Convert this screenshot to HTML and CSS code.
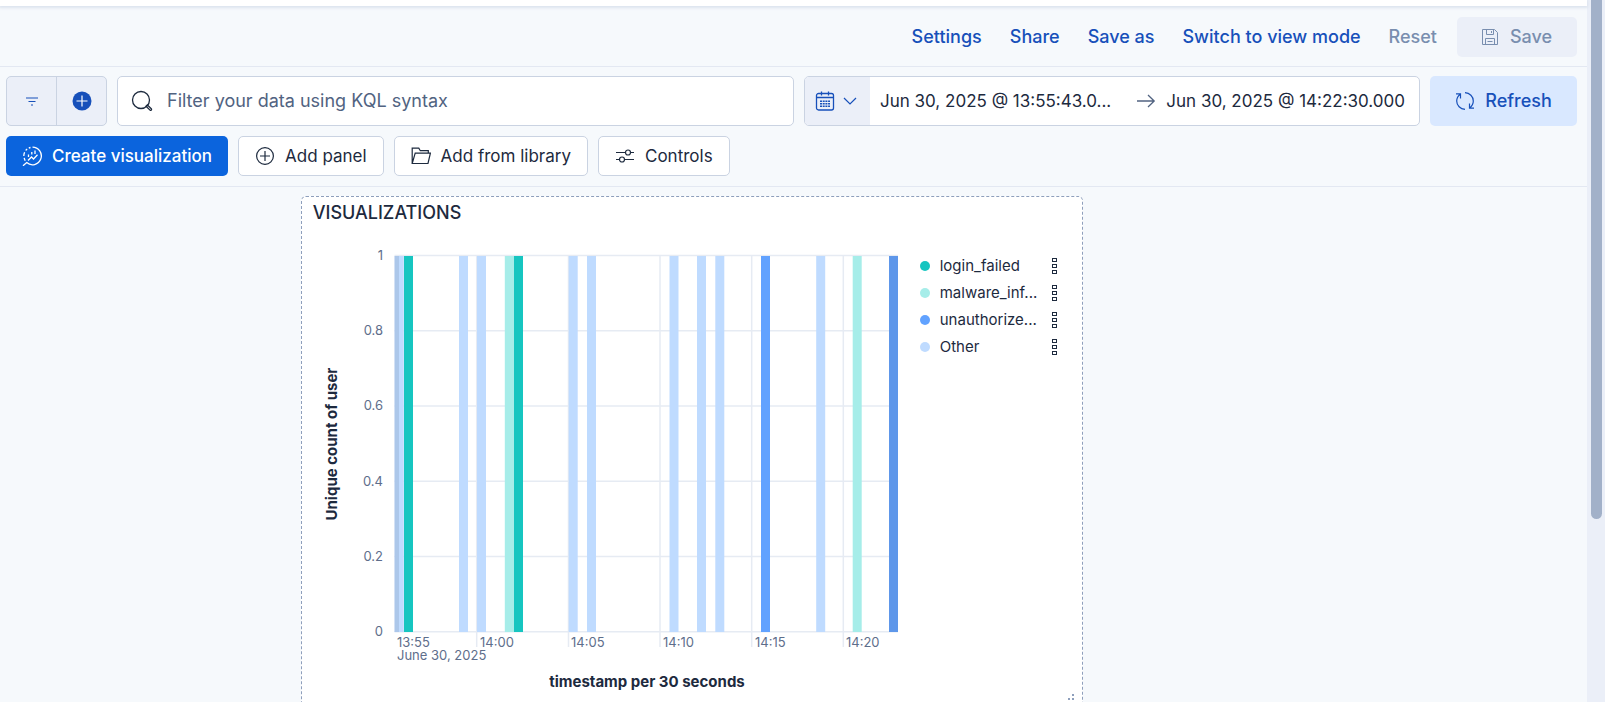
FILE: index.html
```html
<!DOCTYPE html>
<html lang="en">
<head>
<meta charset="utf-8">
<title>Dashboard</title>
<link rel="stylesheet" href="styles.css">
</head>
<body>
<div class="app">
  <div class="top-strip"></div>
  <header class="header">
    <nav class="links">
      <a href="#">Settings</a>
      <a href="#">Share</a>
      <a href="#">Save as</a>
      <a href="#">Switch to view mode</a>
      <button class="reset" type="button" disabled>Reset</button>
    </nav>
    <button class="btn btn-disabled" type="button" disabled>
      <svg class="icon" viewBox="0 0 16 16" fill="none" stroke="currentColor"><path d="M.5.500h12L15.500 3.500v12H.5zM4.500.5v5h7v-5M3.500 15.500v-6h9v6M9.500 2v2M5.500 12.500h5"/></svg>
      Save
    </button>
  </header>
  <section class="query">
    <div class="filters">
      <button type="button" aria-label="Saved queries"><svg class="icon" viewBox="0 0 16 16" fill="none" stroke="currentColor" stroke-width="1.200"><path d="M2 5h12M4.500 8.500h7M7 12h2"/></svg></button>
      <button type="button" aria-label="Add filter"><svg class="icon-lg" viewBox="0 0 20 20"><circle cx="10" cy="10" r="9.500" fill="currentColor"/><path d="M10 4.500v11M4.500 10h11" stroke="#fff" stroke-width="1.200"/></svg></button>
    </div>
    <label class="search">
      <svg class="icon-xl" viewBox="0 0 22 22" fill="none" stroke="currentColor" stroke-width="1.300"><circle cx="10" cy="10" r="8.500"/><path d="M15 16.200l1.300-1.300 4 3.900a.9.9 0 0 1-1.300 1.300z"/></svg>
      <input type="text" aria-label="Filter your data" placeholder="Filter your data using KQL syntax">
    </label>
    <div class="dates">
      <button class="quick" type="button" aria-label="Date quick select">
        <svg class="icon-lg" viewBox="0 0 20 20" fill="none" stroke="currentColor" stroke-width="1.300"><rect x="1.500" y="2.500" width="17" height="16.500" rx="2"/><path d="M1.500 6.500h17M6.500.5v4M13.500.5v4"/><path d="M5 10.200h10M5 12.700h10M5 15.200h10" stroke-width="1.500" stroke-dasharray="2 .7"/></svg>
        <svg class="chevron" viewBox="0 0 14 8" fill="none" stroke="currentColor" stroke-width="1.200"><path d="M1 1l6 6 6-6"/></svg>
      </button>
      <button class="date date-start" type="button">Jun 30, 2025 @ 13:55:43.0...</button>
      <svg class="icon-lg arrow" viewBox="0 0 20 20" fill="none" stroke="currentColor" stroke-width="1.300"><path d="M1 10h17M12 4l6.200 6L12 16"/></svg>
      <button class="date" type="button">Jun 30, 2025 @ 14:22:30.000</button>
    </div>
    <button class="btn btn-refresh" type="button">
      <svg class="icon-lg" viewBox="0 0 20 20" fill="none" stroke="currentColor" stroke-width="1.200"><path d="M10 1.700c4.700.2 8.300 3.700 8.300 8.300 0 2.800-1.200 5-3.600 7M14.500 12.500v4.700h4.500M10 18.300C5.300 18.100 1.700 14.600 1.700 10c0-2.800 1.200-5 3.600-7M5.500 7.500V2.800H1"/></svg>
      Refresh
    </button>
  </section>
  <section class="toolbar">
    <button class="btn btn-primary" type="button">
      <svg class="icon-lg" viewBox="0 0 20 20" fill="none" stroke="currentColor" stroke-width="1.300"><path d="M10.500 1.200a8.800 8.800 0 1 1-5.800 15.400L1 19.800M3.200 14.700a9 9 0 0 1-1-2.800M1.800 10a9 9 0 0 1 .8-3.800M3.700 4.500a9 9 0 0 1 1.500-1.400M6.800 2.100a9 9 0 0 1 1.700-.6"/><path d="M6 14.500l3.500-3.500 2 2 4-4.300M6.500 11V8.500M9.800 8.500V6M13 8V4.500"/></svg>
      Create visualization
    </button>
    <button class="btn btn-plain" type="button">
      <svg class="icon-lg" viewBox="0 0 20 20" fill="none" stroke="currentColor" stroke-width="1.200"><circle cx="10" cy="10" r="8.400"/><path d="M10 5v10M5 10h10"/></svg>
      Add panel
    </button>
    <button class="btn btn-plain" type="button">
      <svg class="icon-lg" viewBox="0 0 20 20" fill="none" stroke="currentColor" stroke-width="1.200"><path d="M1.200 17.500V2.200h6.600l1.500 2.500h8v2.500M1.200 17.500L4.200 7.200h15.200L17 17.500z"/></svg>
      Add from library
    </button>
    <button class="btn btn-plain" type="button">
      <svg class="icon-lg" viewBox="0 0 20 20" fill="none" stroke="currentColor" stroke-width="1.200"><path d="M1 6.500h9.500M15.500 6.500H19M1 13.500h3.500M9.500 13.500H19"/><circle cx="13" cy="6.500" r="2.500"/><circle cx="7" cy="13.500" r="2.500"/></svg>
      Controls
    </button>
  </section>
  <main class="board">
    <article class="panel">
      <h2>VISUALIZATIONS</h2>
      <div class="panel-body">
        <svg class="chart" viewBox="0 0 600 480" role="img" aria-label="Unique count of user per 30 seconds">
          <g class="grid">
            <path d="M92.500 29.500H596M92.500 104.800H596M92.500 180H596M92.500 255.200H596M92.500 330.500H596M92.500 405.700H596"/>
            <path d="M174.700 29.500V421M266.500 29.500V421M358 29.500V421M449.700 29.500V421M541.300 29.500V421"/>
          </g>
          <g class="other">
            <rect x="92.500" y="30" width="9.300" height="376"/>
            <rect x="157" y="30" width="9" height="376"/>
            <rect x="175" y="30" width="9" height="376"/>
            <rect x="266.700" y="30" width="9" height="376"/>
            <rect x="285" y="30" width="9" height="376"/>
            <rect x="367.500" y="30" width="9" height="376"/>
            <rect x="395" y="30" width="9" height="376"/>
            <rect x="413.300" y="30" width="9" height="376"/>
            <rect x="514.200" y="30" width="9" height="376"/>
          </g>
          <g class="login">
            <rect x="102" y="30" width="9" height="376"/>
            <rect x="212" y="30" width="9" height="376"/>
          </g>
          <g class="malware">
            <rect x="202.800" y="30" width="9.200" height="376"/>
            <rect x="550.700" y="30" width="9" height="376"/>
          </g>
          <g class="unauthorized">
            <rect x="459" y="30" width="9" height="376"/>
            <rect x="587" y="30" width="9" height="376"/>
          </g>
          <g class="endzone">
            <rect x="92.500" y="30" width="4.500" height="376"/>
            <rect x="587" y="30" width="9" height="376"/>
          </g>
          <g class="tick tick-y">
            <text x="81" y="34">1</text>
            <text x="81" y="109">0.8</text>
            <text x="81" y="184">0.6</text>
            <text x="81" y="260">0.4</text>
            <text x="81" y="335">0.2</text>
            <text x="81" y="410">0</text>
          </g>
          <g class="tick">
            <text x="95" y="421">13:55</text>
            <text x="95" y="434">June 30, 2025</text>
            <text x="178" y="421">14:00</text>
            <text x="269" y="421">14:05</text>
            <text x="361" y="421">14:10</text>
            <text x="453" y="421">14:15</text>
            <text x="544" y="421">14:20</text>
          </g>
          <text class="axis-title" x="345" y="461">timestamp per 30 seconds</text>
          <text class="axis-title" transform="translate(35 218) rotate(-90)">Unique count of user</text>
        </svg>
        <ul class="legend">
          <li><i class="dot dot-login"></i><span>login_failed</span><button type="button" aria-label="login_failed options"><svg class="kebab" viewBox="0 0 5 16"><path d="M.5.500h4v3h-4zM.5 6.500h4v3h-4zM.5 12.500h4v3h-4z"/></svg></button></li>
          <li><i class="dot dot-malware"></i><span>malware_inf...</span><button type="button" aria-label="malware_inf options"><svg class="kebab" viewBox="0 0 5 16"><path d="M.5.500h4v3h-4zM.5 6.500h4v3h-4zM.5 12.500h4v3h-4z"/></svg></button></li>
          <li><i class="dot dot-unauthorized"></i><span>unauthorize...</span><button type="button" aria-label="unauthorize options"><svg class="kebab" viewBox="0 0 5 16"><path d="M.5.500h4v3h-4zM.5 6.500h4v3h-4zM.5 12.500h4v3h-4z"/></svg></button></li>
          <li><i class="dot dot-other"></i><span>Other</span><button type="button" aria-label="Other options"><svg class="kebab" viewBox="0 0 5 16"><path d="M.5.500h4v3h-4zM.5 6.500h4v3h-4zM.5 12.500h4v3h-4z"/></svg></button></li>
        </ul>
      </div>
      <svg class="resize" viewBox="0 0 12 12" fill="currentColor"><path d="M8 0h2v2H8zM8 4h2v2H8zM4 4h2v2H4zM8 8h2v2H8zM4 8h2v2H4zM0 8h2v2H0z"/></svg>
    </article>
  </main>
</div>
<div class="scroll-track"><div class="scroll-thumb"></div></div>
</body>
</html>
```
FILE: styles.css
```css
* { box-sizing: border-box; }

body {
  margin: 0;
  height: 100vh;
  display: flex;
  overflow: hidden;
  background: #f6f9fc;
  color: #1d2a3e;
  font: 400 18px/24px Inter, "Liberation Sans", sans-serif;
}

button, input { font: inherit; color: inherit; }
button { padding: 0; border: 0; background: none; }
svg { flex: none; display: block; }

.app { flex: 1; min-width: 0; }

.top-strip {
  position: relative;
  height: 6px;
  background: #fff;
  box-shadow: 0 1px 3px 1px #dce3ee;
}

.header {
  display: flex;
  justify-content: flex-end;
  align-items: center;
  gap: 20px;
  height: 61px;
  padding: 2px 10px 0;
  border-bottom: 1px solid #e3e8f2;
}

.links { display: flex; gap: 28px; font-weight: 500; color: #1750ba; }
.links a { color: inherit; text-decoration: none; }
.links .reset { color: #798eaf; }

.btn {
  display: flex;
  align-items: center;
  justify-content: center;
  gap: 10px;
  height: 40px;
  border-radius: 5px;
  white-space: nowrap;
}
.btn-disabled { width: 120px; gap: 12px; background: #ebeff8; color: #798eaf; font-weight: 500; }
.btn-primary { padding: 0 16px; background: #0b64dd; color: #fff; font-weight: 500; }
.btn-plain { padding: 0 16px; background: #fff; border: 1px solid #cad3e2; }
.btn-refresh { width: 147px; height: 50px; background: #d9e8ff; color: #1750ba; font-weight: 500; }

.icon { width: 16px; height: 16px; }
.icon-lg { width: 20px; height: 20px; }
.icon-xl { width: 22px; height: 22px; }

.query { display: flex; gap: 10px; padding: 9px 10px 10px 6px; }

.filters {
  display: flex;
  width: 101px;
  height: 50px;
  border: 1px solid #cad3e2;
  border-radius: 5px;
  background: #ebeff8;
  color: #1750ba;
}
.filters button { flex: 1; display: flex; align-items: center; justify-content: center; }
.filters button + button { border-left: 1px solid #cad3e2; }

.search {
  flex: 1;
  display: flex;
  align-items: center;
  gap: 14px;
  padding: 0 13px;
  border: 1px solid #cad3e2;
  border-radius: 5px;
  background: #fff;
}
.search input { flex: 1; min-width: 0; padding: 0; border: 0; outline: 0; background: none; }
.search input::placeholder { color: #516381; opacity: 1; }

.dates {
  display: flex;
  align-items: center;
  width: 616px;
  border: 1px solid #cad3e2;
  border-radius: 5px;
  background: #fff;
  overflow: hidden;
  white-space: nowrap;
  font-size: 17px;
}
.quick {
  display: flex;
  align-items: center;
  gap: 8px;
  width: 65px;
  height: 100%;
  padding-left: 10px;
  background: #ebeff8;
  color: #1750ba;
}
.chevron { width: 14px; height: 8px; }
.date-start { flex: 1; padding-left: 10px; text-align: left; }
.arrow { margin-right: 10px; color: #516381; }
.date:last-child { padding-right: 14px; }

.toolbar {
  display: flex;
  gap: 10px;
  padding: 0 6px 10px;
  border-bottom: 1px solid #e3e8f2;
  font-size: 17px;
}

.board { padding-top: 9px; }

.panel {
  position: relative;
  width: 49.300%;
  margin-left: 18.950%;
  border: 1px dashed #8e9fbc;
  border-radius: 5px;
  background: #fff;
}
.panel h2 { margin: 0; padding: 4px 11px 1px; font-size: 18px; line-height: 24px; font-weight: 500; }
.panel-body { display: flex; }

.chart { width: 600px; height: auto; flex: 0 1 auto; min-width: 0; }
.grid { fill: none; stroke: #e6ebf3; stroke-width: 1.500; }
.other { fill: #bfdbff; }
.login { fill: #16c5c0; }
.malware { fill: #a6ede9; }
.unauthorized { fill: #61a2ff; }
.endzone { fill: #516381; fill-opacity: .17; }
.tick { font-size: 13px; fill: #5e6e8b; }
.tick-y { text-anchor: end; }
.axis-title { font-size: 15px; font-weight: 700; text-anchor: middle; fill: #1d2a3e; }

.legend {
  flex: 1;
  min-width: 0;
  display: grid;
  align-content: start;
  gap: 3px;
  margin: 0;
  padding: 28px 25px 0 18px;
  list-style: none;
  font-size: 15px;
}
.legend li { display: flex; align-items: center; gap: 10px; }
.legend span { flex: 1; white-space: nowrap; }
.dot { width: 10px; height: 10px; border-radius: 50%; }
.dot-login { background: #16c5c0; }
.dot-malware { background: #a6ede9; }
.dot-unauthorized { background: #61a2ff; }
.dot-other { background: #bfdbff; }
.kebab { width: 5px; height: 16px; fill: none; stroke: #1d2a3e; shape-rendering: crispEdges; }

.resize { position: absolute; right: 6px; bottom: 0; width: 12px; height: 12px; color: #8e9fbc; }

.scroll-track { width: 18px; padding: 0 3px 0 4px; background: #ebeff8; }
.scroll-thumb { height: 74%; background: #a2b1c9; border-radius: 0 0 6px 6px; }
```
